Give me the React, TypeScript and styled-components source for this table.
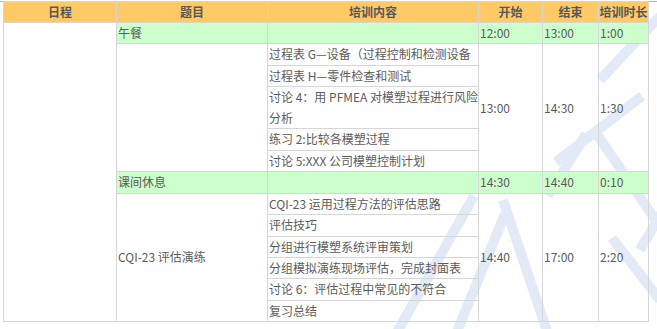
import React from "react";
import styled, { createGlobalStyle } from "styled-components";

const Global = createGlobalStyle`
  html, body {
    margin: 0;
    padding: 0;
    background: #ffffff;
  }
  body {
    font-family: "Noto Sans CJK SC", "Noto Sans", sans-serif;
  }
`;

const Page = styled.div`
  position: relative;
  width: 657px;
  height: 329px;
  overflow: hidden;
  padding: 1px 0 0 3px;
  box-sizing: border-box;
`;

const TopRule = styled.div`
  position: absolute;
  left: 0;
  right: 0;
  top: 1px;
  height: 1px;
  background: #9db5d6;
`;

const Watermark = styled.svg`
  position: absolute;
  left: 0;
  top: 0;
  width: 657px;
  height: 329px;
  pointer-events: none;
`;

const Table = styled.table`
  position: relative;
  border-collapse: collapse;
  table-layout: fixed;
  width: 645px;
  font-size: 12px;
  color: #5b5b5b;
`;

const HeadCell = styled.th`
  background: #ffca66;
  border: 1px solid #d6d6d6;
  font-weight: bold;
  color: #585858;
  text-align: center;
  padding: 0;
  line-height: 20px;
  white-space: nowrap;
  overflow: hidden;
`;

const Cell = styled.td<{ $green?: boolean }>`
  background: ${(p) => (p.$green ? "#ccffcc" : "transparent")};
  border: 1px solid #d6d6d6;
  padding: 0 0 0 1px;
  line-height: 20.45px;
  vertical-align: middle;
  white-space: nowrap;
  overflow: hidden;
`;

const block1: React.ReactNode[] = [
  "过程表 G—设备（过程控制和检测设备",
  "过程表 H—零件检查和测试",
  <>
    讨论 4：用 PFMEA 对模塑过程进行风险
    <br />
    分析
  </>,
  "练习 2:比较各模塑过程",
  "讨论 5:XXX 公司模塑控制计划",
];

const block2: string[] = [
  "CQI-23 运用过程方法的评估思路",
  "评估技巧",
  "分组进行模塑系统评审策划",
  "分组模拟演练现场评估，完成封面表",
  "讨论 6：评估过程中常见的不符合",
  "复习总结",
];

// faint diagonal watermark strokes behind the table
const strokes: [number, number, number, number][] = [
  [396, 334, 474, 196],
  [503, 200, 548, 334],
  [456, 334, 505, 214],
  [548, 196, 586, 134],
  [556, 162, 642, 96],
  [598, 136, 657, 222],
  [612, 238, 660, 300],
  [640, 250, 662, 212],
  [600, 80, 660, 16],
];

export default function App() {
  return (
    <Page>
      <Global />
      <TopRule />
      <Watermark viewBox="0 0 657 329">
        {strokes.map(([x1, y1, x2, y2], i) => (
          <line
            key={i}
            x1={x1}
            y1={y1}
            x2={x2}
            y2={y2}
            stroke="#e1eaf6"
            strokeWidth={10}
          />
        ))}
      </Watermark>
      <Table>
        <colgroup>
          <col style={{ width: 113 }} />
          <col style={{ width: 151 }} />
          <col style={{ width: 211 }} />
          <col style={{ width: 64 }} />
          <col style={{ width: 56 }} />
          <col style={{ width: 50 }} />
        </colgroup>
        <thead>
          <tr>
            <HeadCell>日程</HeadCell>
            <HeadCell>题目</HeadCell>
            <HeadCell>培训内容</HeadCell>
            <HeadCell>开始</HeadCell>
            <HeadCell>结束</HeadCell>
            <HeadCell>培训时长</HeadCell>
          </tr>
        </thead>
        <tbody>
          <tr>
            <Cell rowSpan={13} />
            <Cell $green>午餐</Cell>
            <Cell $green />
            <Cell $green>12:00</Cell>
            <Cell $green>13:00</Cell>
            <Cell $green>1:00</Cell>
          </tr>
          {block1.map((c, i) => (
            <tr key={"a" + i}>
              {i === 0 && <Cell rowSpan={5} />}
              <Cell>{c}</Cell>
              {i === 0 && (
                <>
                  <Cell rowSpan={5}>13:00</Cell>
                  <Cell rowSpan={5}>14:30</Cell>
                  <Cell rowSpan={5}>1:30</Cell>
                </>
              )}
            </tr>
          ))}
          <tr>
            <Cell $green>课间休息</Cell>
            <Cell $green />
            <Cell $green>14:30</Cell>
            <Cell $green>14:40</Cell>
            <Cell $green>0:10</Cell>
          </tr>
          {block2.map((c, i) => (
            <tr key={"b" + i}>
              {i === 0 && <Cell rowSpan={6}>CQI-23 评估演练</Cell>}
              <Cell>{c}</Cell>
              {i === 0 && (
                <>
                  <Cell rowSpan={6}>14:40</Cell>
                  <Cell rowSpan={6}>17:00</Cell>
                  <Cell rowSpan={6}>2:20</Cell>
                </>
              )}
            </tr>
          ))}
        </tbody>
      </Table>
    </Page>
  );
}
